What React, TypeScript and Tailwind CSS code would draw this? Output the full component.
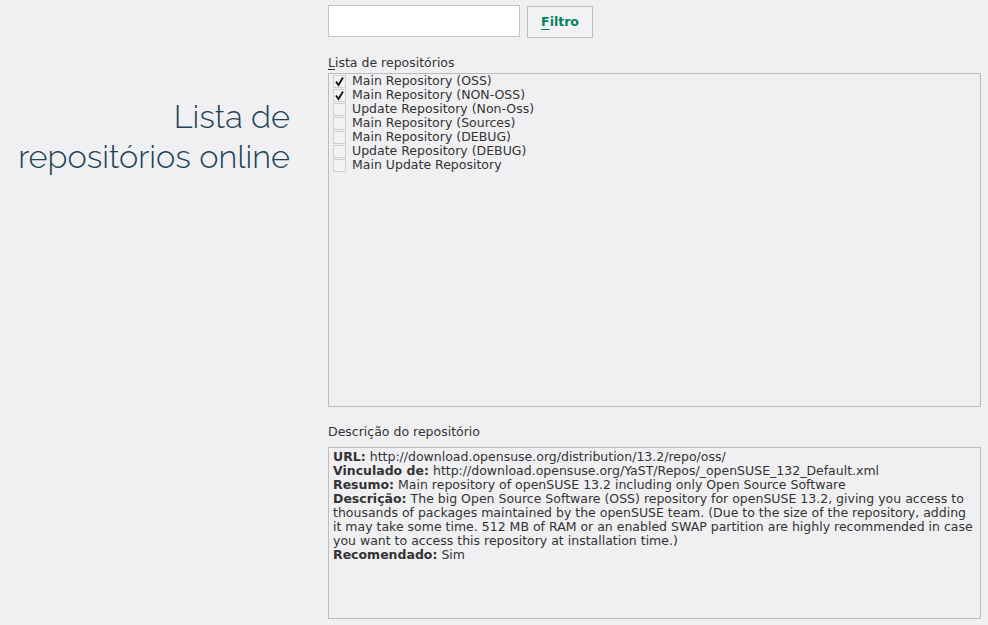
const repos = [
  { name: 'Main Repository (OSS)', checked: true },
  { name: 'Main Repository (NON-OSS)', checked: true },
  { name: 'Update Repository (Non-Oss)', checked: false },
  { name: 'Main Repository (Sources)', checked: false },
  { name: 'Main Repository (DEBUG)', checked: false },
  { name: 'Update Repository (DEBUG)', checked: false },
  { name: 'Main Update Repository', checked: false },
];

const Check = ({ checked }: { checked: boolean }) => (
  <div className="w-[13px] h-[13px] border border-[#cfcfd2] bg-[#f3f3f5] flex items-center justify-center shrink-0">
    {checked && (
      <svg width="11" height="11" viewBox="0 0 11 11">
        <path d="M2 5.5 L4.5 9 L9 1.5" fill="none" stroke="#111111" strokeWidth="1.8" />
      </svg>
    )}
  </div>
);

const App = () => {
  return (
    <div className="w-[988px] h-[625px] bg-[#f0f0f2] flex text-[12.5px] leading-[14px] text-[#333333] font-['DejaVu_Sans',sans-serif] overflow-hidden">
      <div className="w-[290px] pt-[97px] text-right">
        <h1 className="font-['Raleway','Lato',sans-serif] font-light text-[32.5px] leading-[40px] text-[#1b4457]">
          Lista de
          <br />
          repositórios online
        </h1>
      </div>

      <div className="ml-[38px] w-[653px] pt-[5px]">
        <div className="flex items-start">
          <input className="w-[192px] h-[32px] bg-white border border-[#c4c4c6] outline-none" />
          <button className="ml-[7px] mt-[1px] w-[66px] h-[32px] bg-[#f2f2f4] border border-[#bdbdbf] text-[#00835f] font-bold">
            <span className="underline underline-offset-[3px]">F</span>iltro
          </button>
        </div>

        <div className="mt-[18px] mb-[3px]">
          <span className="underline underline-offset-[2px]">L</span>ista de repositórios
        </div>
        <div className="h-[334px] border border-[#bcbcbe] pl-[4px]">
          {repos.map((r) => (
            <div key={r.name} className="flex items-center h-[14px]">
              <Check checked={r.checked} />
              <span className="ml-[6px] -mt-[1px]">{r.name}</span>
            </div>
          ))}
        </div>

        <div className="mt-[18px] mb-[8px]">Descrição do repositório</div>
        <div className="h-[172px] border border-[#bcbcbe] pl-[4px] pr-[6px] pt-[2px]">
          <p>
            <b>URL:</b> http://download.opensuse.org/distribution/13.2/repo/oss/
            <br />
            <b>Vinculado de:</b> http://download.opensuse.org/YaST/Repos/_openSUSE_132_Default.xml
            <br />
            <b>Resumo:</b> Main repository of openSUSE 13.2 including only Open Source Software
            <br />
            <b>Descrição:</b> The big Open Source Software (OSS) repository for openSUSE 13.2, giving you access to thousands of packages maintained by the openSUSE team. (Due to the size of the repository, adding it may take some time. 512 MB of RAM or an enabled SWAP partition are highly recommended in case you want to access this repository at installation time.)
            <br />
            <b>Recomendado:</b> Sim
          </p>
        </div>
      </div>
    </div>
  );
};

export default App;
